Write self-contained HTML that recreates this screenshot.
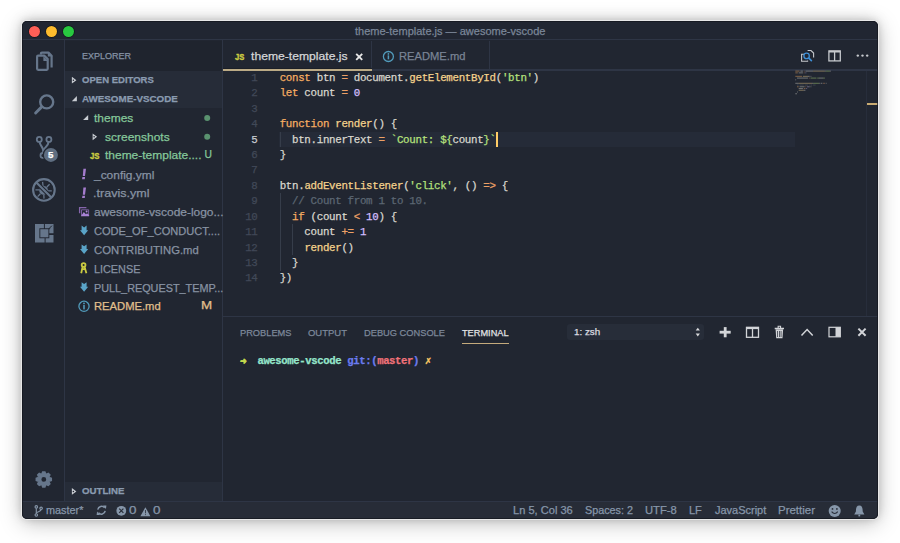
<!DOCTYPE html>
<html><head><meta charset="utf-8">
<style>
*{margin:0;padding:0;box-sizing:border-box}
html,body{width:900px;height:543px;overflow:hidden;background:#fff}
body{position:relative;font-family:"Liberation Sans",sans-serif}
.a{position:absolute}
.t{position:absolute;white-space:pre;line-height:0;height:0;-webkit-text-stroke-width:.25px}
svg.a{overflow:visible}
</style></head><body>
<div class="a" style="left:21.9px;top:21.1px;width:855.90px;height:497.50px;border-radius:5px;box-shadow:0 0 0 1.1px rgba(236,236,236,.85),0 0 7px rgba(0,0,0,.13),0 -2px 14px rgba(0,0,0,.10),0 4px 22px rgba(0,0,0,.25)"></div>
<div class="a" style="left:21.9px;top:21.1px;width:855.90px;height:497.50px;border-radius:5px;overflow:hidden;background:#212631">
<div class="a" style="left:-21.9px;top:-21.1px;width:900px;height:543px">
<div class="a" style="left:21.90px;top:21.10px;width:855.90px;height:18.80px;background:#212632;"></div>
<div class="a" style="left:21.90px;top:39.30px;width:855.90px;height:1.20px;background:#2e3545;"></div>
<div class="a" style="left:28.9px;top:25.6px;width:11px;height:11px;border-radius:50%;background:#fe5f57;box-shadow:0 0 0 .7px rgba(0,0,0,.45)"></div>
<div class="a" style="left:46.1px;top:25.6px;width:11px;height:11px;border-radius:50%;background:#febc2e;box-shadow:0 0 0 .7px rgba(0,0,0,.45)"></div>
<div class="a" style="left:63.3px;top:25.6px;width:11px;height:11px;border-radius:50%;background:#28c840;box-shadow:0 0 0 .7px rgba(0,0,0,.45)"></div>
<div class="t" style="left:354.96px;top:31.10px;font:normal 11.7px/0 'Liberation Sans',sans-serif;color:#7b8698;transform:scaleX(0.9426);transform-origin:0 0;">theme-template.js — awesome-vscode</div>
<div class="a" style="left:64.00px;top:39.90px;width:1.20px;height:461.60px;background:#2e3545;"></div>
<svg class="a" style="left:0;top:0" width="900" height="543" viewBox="0 0 900 543" ><g fill="none" stroke="#66768b" stroke-width="2.2" stroke-linejoin="round">
<path d="M40.9,54.6 V53.6 Q40.9,52.6 41.9,52.6 H48.5 L51.6,55.7 V67.6"/>
<path d="M38.1,55.7 H44.4 L47.7,59.0 V68.8 Q47.7,69.8 46.7,69.8 H38.1 Q37.1,69.8 37.1,68.8 V56.7 Q37.1,55.7 38.1,55.7 Z"/>
</g><path d="M43.4,56.2 V61.0 H48.2 Z" fill="#66768b"/><path d="M47.8,51.6 V56.4 H52.6 Z" fill="#66768b"/></svg>
<svg class="a" style="left:0;top:0" width="900" height="543" viewBox="0 0 900 543" ><g fill="none" stroke="#66768b"><circle cx="46.7" cy="101.9" r="6.5" stroke-width="2.4"/>
<path d="M41.2,107.4 L35.6,113.0" stroke-width="2.9" stroke-linecap="round"/></g></svg>
<svg class="a" style="left:0;top:0" width="900" height="543" viewBox="0 0 900 543" ><g fill="none" stroke="#66768b" stroke-width="1.8"><circle cx="39.3" cy="139.4" r="2.5"/><circle cx="48.9" cy="139.4" r="2.5"/>
<circle cx="42.9" cy="155.4" r="2.4"/><path d="M39.6,142 C40,146 43.2,147 43.2,150.5 V153" stroke-width="2.1"/><path d="M48.6,142 C48.2,146 45,147 43.2,150.5" stroke-width="2.1"/></g>
<circle cx="50.9" cy="154.9" r="8.2" fill="#212631"/><circle cx="50.9" cy="154.9" r="7.0" fill="#5f6e81"/></svg>
<div class="t" style="left:48.34px;top:155.10px;font:bold 9.4px/0 'Liberation Sans',sans-serif;color:#ffffff;transform:scaleX(1.0316);transform-origin:0 0;">5</div>
<svg class="a" style="left:0;top:0" width="900" height="543" viewBox="0 0 900 543" ><g fill="#66768b"><circle cx="43.6" cy="190.4" r="4.4"/></g>
<g stroke="#66768b" stroke-width="1.3" fill="none"><path d="M35.4,189.9 H39.4 M48.0,190.9 H51.8 M42.6,181.9 L43.0,186.0 M43.8,194.6 L44.0,198.6 M37.2,184.8 L40.2,187.2 M47.0,194.0 L49.8,196.6 M37.6,196.6 L40.4,193.8 M46.8,187 L49.6,184.2"/></g>
<path d="M36.4,182.4 L51.4,197.4" stroke="#212631" stroke-width="4.2"/>
<g fill="none" stroke="#66768b" stroke-width="2.1"><circle cx="43.9" cy="189.9" r="10.8"/><path d="M36.4,182.4 L51.4,197.4"/></g></svg>
<svg class="a" style="left:0;top:0" width="900" height="543" viewBox="0 0 900 543" ><g fill="#66768b"><path d="M35,224 H43.9 V228.3 H39.4 V238.3 H44.6 V242.5 H35 Z"/>
<path d="M44.9,224 H53.5 V233.3 H49.3 V229.6 L50.6,228.3 H44.9 Z"/><path d="M49.3,234.9 H53.5 V242.5 H45.6 V238.3 H49.3 Z"/>
<rect x="40.3" y="229.2" width="8.1" height="8.1"/></g><path d="M48.6,229.0 L51.9,225.7" stroke="#212631" stroke-width="1.0"/></svg>
<svg class="a" style="left:0;top:0" width="900" height="543" viewBox="0 0 900 543" ><path d="M49.33,476.82 L52.05,477.80 L52.05,481.00 L49.33,481.98 L49.53,481.49 L50.76,484.10 L48.50,486.36 L45.89,485.13 L46.38,484.93 L45.40,487.65 L42.20,487.65 L41.22,484.93 L41.71,485.13 L39.10,486.36 L36.84,484.10 L38.07,481.49 L38.27,481.98 L35.55,481.00 L35.55,477.80 L38.27,476.82 L38.07,477.31 L36.84,474.70 L39.10,472.44 L41.71,473.67 L41.22,473.87 L42.20,471.15 L45.40,471.15 L46.38,473.87 L45.89,473.67 L48.50,472.44 L50.76,474.70 L49.53,477.31Z M46.199999999999996,479.4 A2.4,2.4 0 1,0 41.4,479.4 A2.4,2.4 0 1,0 46.199999999999996,479.4Z" fill="#66768b" fill-rule="evenodd"/></svg>
<div class="a" style="left:65.20px;top:40.50px;width:156.70px;height:30.20px;background:#1f242e;"></div>
<div class="a" style="left:65.20px;top:70.70px;width:156.70px;height:37.50px;background:#262c38;"></div>
<div class="a" style="left:65.20px;top:482.00px;width:156.70px;height:19.50px;background:#262c38;"></div>
<div class="a" style="left:221.90px;top:39.90px;width:1.20px;height:461.60px;background:#2e3545;"></div>
<div class="t" style="left:81.98px;top:56.20px;font:normal 9.4px/0 'Liberation Sans',sans-serif;color:#8592a4;transform:scaleX(0.9620);transform-origin:0 0;">EXPLORER</div>
<div class="t" style="left:82.22px;top:79.90px;font:bold 9.9px/0 'Liberation Sans',sans-serif;color:#8a9bb0;transform:scaleX(0.9654);transform-origin:0 0;">OPEN EDITORS</div>
<div class="t" style="left:82.45px;top:98.60px;font:bold 9.9px/0 'Liberation Sans',sans-serif;color:#8a9bb0;transform:scaleX(0.9927);transform-origin:0 0;">AWESOME-VSCODE</div>
<div class="t" style="left:82.21px;top:491.20px;font:bold 9.9px/0 'Liberation Sans',sans-serif;color:#8a9bb0;transform:scaleX(0.9812);transform-origin:0 0;">OUTLINE</div>
<svg class="a" style="left:0;top:0" width="900" height="543" viewBox="0 0 900 543" ><path d="M71.9,76.8 L76.4,80.2 L71.9,83.60000000000001 Z" fill="#c8ccd2"/><circle cx="73.4" cy="80.2" r="0.75" fill="#212631"/></svg>
<svg class="a" style="left:0;top:0" width="900" height="543" viewBox="0 0 900 543" ><path d="M76.89999999999999,96.1 V101.2 H71.8 Z" fill="#c8ccd2"/></svg>
<svg class="a" style="left:0;top:0" width="900" height="543" viewBox="0 0 900 543" ><path d="M71.9,488.0 L76.4,491.4 L71.9,494.79999999999995 Z" fill="#c8ccd2"/><circle cx="73.4" cy="491.4" r="0.75" fill="#212631"/></svg>
<svg class="a" style="left:0;top:0" width="900" height="543" viewBox="0 0 900 543" ><path d="M88.2,115.0 V120.10000000000001 H83.10000000000001 Z" fill="#c8ccd2"/></svg>
<svg class="a" style="left:0;top:0" width="900" height="543" viewBox="0 0 900 543" ><path d="M92.6,133.4 L97.1,136.8 L92.6,140.20000000000002 Z" fill="#c8ccd2"/><circle cx="94.1" cy="136.8" r="0.75" fill="#212631"/></svg>
<div class="t" style="left:94.14px;top:118.10px;font:normal 11.7px/0 'Liberation Sans',sans-serif;color:#85c89a;transform:scaleX(1.0252);transform-origin:0 0;">themes</div>
<svg class="a" style="left:0;top:0" width="900" height="543" viewBox="0 0 900 543" ><circle cx="207.2" cy="117.9" r="3.0" fill="#5a926f"/></svg>
<div class="t" style="left:104.64px;top:136.90px;font:normal 11.7px/0 'Liberation Sans',sans-serif;color:#85c89a;transform:scaleX(1.0256);transform-origin:0 0;">screenshots</div>
<svg class="a" style="left:0;top:0" width="900" height="543" viewBox="0 0 900 543" ><circle cx="207.2" cy="136.7" r="3.0" fill="#5a926f"/></svg>
<div class="t" style="left:104.64px;top:155.40px;font:normal 11.7px/0 'Liberation Sans',sans-serif;color:#85c89a;transform:scaleX(1.0247);transform-origin:0 0;">theme-template....</div>
<div class="t" style="left:204.55px;top:155.40px;font:normal 10.3px/0 'Liberation Sans',sans-serif;color:#85c89a;transform:scaleX(1.0000);transform-origin:0 0;">U</div>
<div class="t" style="left:94.30px;top:174.80px;font:normal 11.7px/0 'Liberation Sans',sans-serif;color:#8893a3;transform:scaleX(1.0215);transform-origin:0 0;">_config.yml</div>
<div class="t" style="left:93.23px;top:193.40px;font:normal 11.7px/0 'Liberation Sans',sans-serif;color:#8893a3;transform:scaleX(1.0739);transform-origin:0 0;">.travis.yml</div>
<div class="t" style="left:94.09px;top:212.20px;font:normal 11.7px/0 'Liberation Sans',sans-serif;color:#8893a3;transform:scaleX(1.0220);transform-origin:0 0;">awesome-vscode-logo...</div>
<div class="t" style="left:94.13px;top:231.10px;font:normal 11.7px/0 'Liberation Sans',sans-serif;color:#8893a3;transform:scaleX(0.9468);transform-origin:0 0;">CODE_OF_CONDUCT....</div>
<div class="t" style="left:94.12px;top:249.90px;font:normal 11.7px/0 'Liberation Sans',sans-serif;color:#8893a3;transform:scaleX(0.9660);transform-origin:0 0;">CONTRIBUTING.md</div>
<div class="t" style="left:93.87px;top:268.70px;font:normal 11.7px/0 'Liberation Sans',sans-serif;color:#8893a3;transform:scaleX(0.9278);transform-origin:0 0;">LICENSE</div>
<div class="t" style="left:93.87px;top:287.60px;font:normal 11.7px/0 'Liberation Sans',sans-serif;color:#8893a3;transform:scaleX(0.9273);transform-origin:0 0;">PULL_REQUEST_TEMP...</div>
<div class="t" style="left:93.84px;top:306.40px;font:normal 11.7px/0 'Liberation Sans',sans-serif;color:#e2c08d;transform:scaleX(0.9594);transform-origin:0 0;">README.md</div>
<div class="t" style="left:201.43px;top:306.40px;font:normal 10.3px/0 'Liberation Sans',sans-serif;color:#e2c08d;transform:scaleX(1.3000);transform-origin:0 0;">M</div>
<div class="t" style="left:89.70px;top:155.60px;font:bold 9.7px/0 'Liberation Sans',sans-serif;color:#cbcb41;transform:scaleX(0.8000);transform-origin:0 0;-webkit-text-stroke-width:.45px">JS</div>
<svg class="a" style="left:0;top:0" width="900" height="543" viewBox="0 0 900 543" ><g fill="#a47ccd"><path d="M83.4,168.7 H86.0 L85.0,176.1 H82.8Z"/><path d="M82.4,177.0 H85.0 L84.8,179.3 H82.1Z"/></g></svg>
<svg class="a" style="left:0;top:0" width="900" height="543" viewBox="0 0 900 543" ><g fill="#a47ccd"><path d="M83.4,187.39999999999998 H86.0 L85.0,194.79999999999998 H82.8Z"/><path d="M82.4,195.7 H85.0 L84.8,198.0 H82.1Z"/></g></svg>
<svg class="a" style="left:0;top:0" width="900" height="543" viewBox="0 0 900 543" ><path d="M79.6,213.2 V207.7 H86.4" fill="none" stroke="#8565ab" stroke-width="1.3"/>
<path d="M81.5,216 V209.8 H88.6 V216" fill="none" stroke="#7a5d9e" stroke-width="1.0"/>
<path d="M80.9,216.2 L83.8,211.9 L85.9,214.3 L87.0,213.3 L89.1,215.0 V216.2 Z" fill="#a883d4"/><circle cx="86.6" cy="211.5" r=".95" fill="#b08ad8"/></svg>
<svg class="a" style="left:0;top:0" width="900" height="543" viewBox="0 0 900 543" ><path d="M81.6,225.60000000000002 L84.1,227.4 L86.6,225.60000000000002 V230.20000000000002 H88.2 L84.1,235.20000000000002 L80.0,230.20000000000002 H81.6 Z" fill="#5aa4c8"/></svg>
<svg class="a" style="left:0;top:0" width="900" height="543" viewBox="0 0 900 543" ><path d="M81.6,244.4 L84.1,246.2 L86.6,244.4 V249.0 H88.2 L84.1,254.0 L80.0,249.0 H81.6 Z" fill="#5aa4c8"/></svg>
<svg class="a" style="left:0;top:0" width="900" height="543" viewBox="0 0 900 543" ><path d="M81.6,282.2 L84.1,284.0 L86.6,282.2 V286.79999999999995 H88.2 L84.1,291.79999999999995 L80.0,286.79999999999995 H81.6 Z" fill="#5aa4c8"/></svg>
<svg class="a" style="left:0;top:0" width="900" height="543" viewBox="0 0 900 543" ><g fill="none" stroke="#cbcb41" stroke-width="1.8"><circle cx="83.6" cy="265.0" r="1.9"/>
<path d="M82.6,267.0 L81.2,273.3 M84.6,267.0 L86.4,273.3"/></g><path d="M81.8,268.2 H85.6 V270 H81.8Z" fill="#cbcb41"/></svg>
<svg class="a" style="left:0;top:0" width="900" height="543" viewBox="0 0 900 543" ><circle cx="84" cy="306.3" r="5.1" fill="none" stroke="#519aba" stroke-width="1.3"/>
<circle cx="84" cy="303.4" r=".9" fill="#519aba"/><rect x="83.2" y="305.0" width="1.6" height="4.4" fill="#519aba"/></svg>
<div class="a" style="left:371.20px;top:40.50px;width:1.20px;height:30.10px;background:#2e3545;"></div>
<div class="a" style="left:488.60px;top:40.50px;width:1.20px;height:30.10px;background:#2e3545;"></div>
<div class="a" style="left:223.10px;top:69.00px;width:654.70px;height:1.90px;background:#2e3545;"></div>
<div class="a" style="left:223.10px;top:68.00px;width:148.70px;height:1.00px;background:#1b1f27;"></div>
<div class="a" style="left:223.10px;top:68.90px;width:148.70px;height:2.00px;background:#bcab86;"></div>
<div class="t" style="left:235.10px;top:56.60px;font:bold 9.6px/0 'Liberation Sans',sans-serif;color:#cbcb41;transform:scaleX(0.7911);transform-origin:0 0;-webkit-text-stroke-width:.45px">JS</div>
<div class="t" style="left:250.54px;top:56.40px;font:normal 11.7px/0 'Liberation Sans',sans-serif;color:#d5d6d8;transform:scaleX(1.0396);transform-origin:0 0;">theme-template.js</div>
<svg class="a" style="left:0;top:0" width="900" height="543" viewBox="0 0 900 543" ><path d="M356.2,53.8 L362.2,59.8 M362.2,53.8 L356.2,59.8" stroke="#e6e6e6" stroke-width="1.9"/></svg>
<svg class="a" style="left:0;top:0" width="900" height="543" viewBox="0 0 900 543" ><circle cx="388.4" cy="56.5" r="5.0" fill="none" stroke="#519aba" stroke-width="1.3"/>
<circle cx="388.4" cy="53.9" r=".85" fill="#519aba"/><rect x="387.65" y="55.3" width="1.5" height="4.0" fill="#519aba"/></svg>
<div class="t" style="left:398.64px;top:56.40px;font:normal 11.7px/0 'Liberation Sans',sans-serif;color:#7a8495;transform:scaleX(0.9565);transform-origin:0 0;">README.md</div>
<svg class="a" style="left:0;top:0" width="900" height="543" viewBox="0 0 900 543" ><g fill="none" stroke="#c5c8cc" stroke-width="1.1"><path d="M807.6,50.5 H811 L813.6,53.1 V57.5"/><path d="M804.3,54.2 H801.6 V61.3 H807.6 V60.5"/></g>
<g fill="none" stroke="#3f8fd6"><circle cx="806.6" cy="55.9" r="2.7" stroke-width="1.3"/><path d="M808.6,57.9 L811.8,61.1" stroke-width="1.6"/></g></svg>
<svg class="a" style="left:0;top:0" width="900" height="543" viewBox="0 0 900 543" ><g fill="none" stroke="#c5c8cc" stroke-width="1.3"><rect x="828.9" y="50.9" width="11.4" height="10.0"/><path d="M834.6,51 V61"/><path d="M828.9,51.7 H840.3" stroke-width="1.8"/></g></svg>
<svg class="a" style="left:0;top:0" width="900" height="543" viewBox="0 0 900 543" ><g fill="#c5c8cc"><circle cx="857.8" cy="55.6" r="1.2"/><circle cx="862.5" cy="55.6" r="1.2"/><circle cx="867.2" cy="55.6" r="1.2"/></g></svg>
<div class="a" style="left:279.20px;top:131.71px;width:516.30px;height:15.43px;background:#252b38;"></div>
<div class="a" style="left:279.90px;top:131.71px;width:0.90px;height:15.43px;background:#363d4a;"></div>
<div class="a" style="left:279.90px;top:193.42px;width:0.90px;height:77.14px;background:#363d4a;"></div>
<div class="a" style="left:292.24px;top:224.28px;width:0.90px;height:30.86px;background:#363d4a;"></div>
<div class="t" style="left:217.00px;width:40.5px;text-align:right;top:77.91px;font:10.8px/0 'Liberation Mono',monospace;letter-spacing:-0.308px;color:#414958">1</div>
<div class="t" style="left:279.70px;top:77.91px;font:10.8px/0 'Liberation Mono',monospace;letter-spacing:-0.308px"><span style="color:#f6ad62">const</span><span style="color:#d9d7ce"> btn </span><span style="color:#eca066">=</span><span style="color:#d9d7ce"> document.</span><span style="color:#f4d28c">getElementById</span><span style="color:#d9d7ce">(</span><span style="color:#b5e07c">'btn'</span><span style="color:#d9d7ce">)</span></div>
<div class="t" style="left:217.00px;width:40.5px;text-align:right;top:93.34px;font:10.8px/0 'Liberation Mono',monospace;letter-spacing:-0.308px;color:#414958">2</div>
<div class="t" style="left:279.70px;top:93.34px;font:10.8px/0 'Liberation Mono',monospace;letter-spacing:-0.308px"><span style="color:#f6ad62">let</span><span style="color:#d9d7ce"> count </span><span style="color:#eca066">=</span><span style="color:#d9d7ce"> </span><span style="color:#d4bfff">0</span></div>
<div class="t" style="left:217.00px;width:40.5px;text-align:right;top:108.77px;font:10.8px/0 'Liberation Mono',monospace;letter-spacing:-0.308px;color:#414958">3</div>
<div class="t" style="left:279.70px;top:108.77px;font:10.8px/0 'Liberation Mono',monospace;letter-spacing:-0.308px"></div>
<div class="t" style="left:217.00px;width:40.5px;text-align:right;top:124.20px;font:10.8px/0 'Liberation Mono',monospace;letter-spacing:-0.308px;color:#414958">4</div>
<div class="t" style="left:279.70px;top:124.20px;font:10.8px/0 'Liberation Mono',monospace;letter-spacing:-0.308px"><span style="color:#f6ad62">function</span><span style="color:#d9d7ce"> </span><span style="color:#f4d28c">render</span><span style="color:#d9d7ce">() {</span></div>
<div class="t" style="left:217.00px;width:40.5px;text-align:right;top:139.63px;font:10.8px/0 'Liberation Mono',monospace;letter-spacing:-0.308px;color:#c7cad0">5</div>
<div class="t" style="left:279.70px;top:139.63px;font:10.8px/0 'Liberation Mono',monospace;letter-spacing:-0.308px"><span style="color:#d9d7ce">  btn.innerText </span><span style="color:#eca066">=</span><span style="color:#d9d7ce"> </span><span style="color:#b5e07c">`Count: ${</span><span style="color:#d9d7ce">count</span><span style="color:#b5e07c">}`</span></div>
<div class="t" style="left:217.00px;width:40.5px;text-align:right;top:155.05px;font:10.8px/0 'Liberation Mono',monospace;letter-spacing:-0.308px;color:#414958">6</div>
<div class="t" style="left:279.70px;top:155.05px;font:10.8px/0 'Liberation Mono',monospace;letter-spacing:-0.308px"><span style="color:#d9d7ce">}</span></div>
<div class="t" style="left:217.00px;width:40.5px;text-align:right;top:170.48px;font:10.8px/0 'Liberation Mono',monospace;letter-spacing:-0.308px;color:#414958">7</div>
<div class="t" style="left:279.70px;top:170.48px;font:10.8px/0 'Liberation Mono',monospace;letter-spacing:-0.308px"></div>
<div class="t" style="left:217.00px;width:40.5px;text-align:right;top:185.91px;font:10.8px/0 'Liberation Mono',monospace;letter-spacing:-0.308px;color:#414958">8</div>
<div class="t" style="left:279.70px;top:185.91px;font:10.8px/0 'Liberation Mono',monospace;letter-spacing:-0.308px"><span style="color:#d9d7ce">btn.</span><span style="color:#f4d28c">addEventListener</span><span style="color:#d9d7ce">(</span><span style="color:#b5e07c">'click'</span><span style="color:#d9d7ce">, () </span><span style="color:#eca066">=&gt;</span><span style="color:#d9d7ce"> {</span></div>
<div class="t" style="left:217.00px;width:40.5px;text-align:right;top:201.34px;font:10.8px/0 'Liberation Mono',monospace;letter-spacing:-0.308px;color:#414958">9</div>
<div class="t" style="left:279.70px;top:201.34px;font:10.8px/0 'Liberation Mono',monospace;letter-spacing:-0.308px"><span style="color:#5c6773">  // Count from 1 to 10.</span></div>
<div class="t" style="left:217.00px;width:40.5px;text-align:right;top:216.77px;font:10.8px/0 'Liberation Mono',monospace;letter-spacing:-0.308px;color:#414958">10</div>
<div class="t" style="left:279.70px;top:216.77px;font:10.8px/0 'Liberation Mono',monospace;letter-spacing:-0.308px"><span style="color:#d9d7ce">  </span><span style="color:#f6ad62">if</span><span style="color:#d9d7ce"> (count </span><span style="color:#eca066">&lt;</span><span style="color:#d9d7ce"> </span><span style="color:#d4bfff">10</span><span style="color:#d9d7ce">) {</span></div>
<div class="t" style="left:217.00px;width:40.5px;text-align:right;top:232.19px;font:10.8px/0 'Liberation Mono',monospace;letter-spacing:-0.308px;color:#414958">11</div>
<div class="t" style="left:279.70px;top:232.19px;font:10.8px/0 'Liberation Mono',monospace;letter-spacing:-0.308px"><span style="color:#d9d7ce">    count </span><span style="color:#eca066">+=</span><span style="color:#d9d7ce"> </span><span style="color:#d4bfff">1</span></div>
<div class="t" style="left:217.00px;width:40.5px;text-align:right;top:247.62px;font:10.8px/0 'Liberation Mono',monospace;letter-spacing:-0.308px;color:#414958">12</div>
<div class="t" style="left:279.70px;top:247.62px;font:10.8px/0 'Liberation Mono',monospace;letter-spacing:-0.308px"><span style="color:#d9d7ce">    </span><span style="color:#f4d28c">render</span><span style="color:#d9d7ce">()</span></div>
<div class="t" style="left:217.00px;width:40.5px;text-align:right;top:263.05px;font:10.8px/0 'Liberation Mono',monospace;letter-spacing:-0.308px;color:#414958">13</div>
<div class="t" style="left:279.70px;top:263.05px;font:10.8px/0 'Liberation Mono',monospace;letter-spacing:-0.308px"><span style="color:#d9d7ce">  }</span></div>
<div class="t" style="left:217.00px;width:40.5px;text-align:right;top:278.48px;font:10.8px/0 'Liberation Mono',monospace;letter-spacing:-0.308px;color:#414958">14</div>
<div class="t" style="left:279.70px;top:278.48px;font:10.8px/0 'Liberation Mono',monospace;letter-spacing:-0.308px"><span style="color:#d9d7ce">})</span></div>
<div class="a" style="left:496.40px;top:131.80px;width:1.70px;height:15.40px;background:#ffcc66;"></div>
<svg class="a" style="left:0;top:0" width="900" height="543" viewBox="0 0 900 543" ><rect x="795.30" y="70.60" width="4.22" height="1.05" fill="#f6ad62" opacity=".42"/><rect x="800.37" y="70.60" width="2.54" height="1.05" fill="#d9d7ce" opacity=".42"/><rect x="803.75" y="70.60" width="0.84" height="1.05" fill="#eca066" opacity=".42"/><rect x="805.44" y="70.60" width="7.60" height="1.05" fill="#d9d7ce" opacity=".42"/><rect x="813.04" y="70.60" width="11.83" height="1.05" fill="#f4d28c" opacity=".42"/><rect x="824.88" y="70.60" width="0.84" height="1.05" fill="#d9d7ce" opacity=".42"/><rect x="825.72" y="70.60" width="4.22" height="1.05" fill="#b5e07c" opacity=".42"/><rect x="829.94" y="70.60" width="0.84" height="1.05" fill="#d9d7ce" opacity=".42"/><rect x="795.30" y="72.34" width="2.54" height="1.05" fill="#f6ad62" opacity=".42"/><rect x="798.68" y="72.34" width="4.22" height="1.05" fill="#d9d7ce" opacity=".42"/><rect x="803.75" y="72.34" width="0.84" height="1.05" fill="#eca066" opacity=".42"/><rect x="805.44" y="72.34" width="0.84" height="1.05" fill="#d4bfff" opacity=".42"/><rect x="795.30" y="75.82" width="6.76" height="1.05" fill="#f6ad62" opacity=".42"/><rect x="802.90" y="75.82" width="5.07" height="1.05" fill="#f4d28c" opacity=".42"/><rect x="807.97" y="75.82" width="1.69" height="1.05" fill="#d9d7ce" opacity=".42"/><rect x="810.51" y="75.82" width="0.84" height="1.05" fill="#d9d7ce" opacity=".42"/><rect x="796.99" y="77.56" width="10.98" height="1.05" fill="#d9d7ce" opacity=".42"/><rect x="808.82" y="77.56" width="0.84" height="1.05" fill="#eca066" opacity=".42"/><rect x="810.51" y="77.56" width="5.92" height="1.05" fill="#b5e07c" opacity=".42"/><rect x="817.27" y="77.56" width="1.69" height="1.05" fill="#b5e07c" opacity=".42"/><rect x="818.96" y="77.56" width="4.22" height="1.05" fill="#d9d7ce" opacity=".42"/><rect x="823.18" y="77.56" width="1.69" height="1.05" fill="#b5e07c" opacity=".42"/><rect x="795.30" y="79.30" width="0.84" height="1.05" fill="#d9d7ce" opacity=".42"/><rect x="795.30" y="82.78" width="3.38" height="1.05" fill="#d9d7ce" opacity=".42"/><rect x="798.68" y="82.78" width="13.52" height="1.05" fill="#f4d28c" opacity=".42"/><rect x="812.20" y="82.78" width="0.84" height="1.05" fill="#d9d7ce" opacity=".42"/><rect x="813.04" y="82.78" width="5.92" height="1.05" fill="#b5e07c" opacity=".42"/><rect x="818.96" y="82.78" width="0.84" height="1.05" fill="#d9d7ce" opacity=".42"/><rect x="820.65" y="82.78" width="1.69" height="1.05" fill="#d9d7ce" opacity=".42"/><rect x="823.18" y="82.78" width="1.69" height="1.05" fill="#eca066" opacity=".42"/><rect x="825.72" y="82.78" width="0.84" height="1.05" fill="#d9d7ce" opacity=".42"/><rect x="796.99" y="84.52" width="1.69" height="1.05" fill="#5c6773" opacity=".42"/><rect x="799.52" y="84.52" width="4.22" height="1.05" fill="#5c6773" opacity=".42"/><rect x="804.59" y="84.52" width="3.38" height="1.05" fill="#5c6773" opacity=".42"/><rect x="808.82" y="84.52" width="0.84" height="1.05" fill="#5c6773" opacity=".42"/><rect x="810.51" y="84.52" width="1.69" height="1.05" fill="#5c6773" opacity=".42"/><rect x="813.04" y="84.52" width="2.54" height="1.05" fill="#5c6773" opacity=".42"/><rect x="796.99" y="86.26" width="1.69" height="1.05" fill="#f6ad62" opacity=".42"/><rect x="799.52" y="86.26" width="5.07" height="1.05" fill="#d9d7ce" opacity=".42"/><rect x="805.44" y="86.26" width="0.84" height="1.05" fill="#eca066" opacity=".42"/><rect x="807.13" y="86.26" width="1.69" height="1.05" fill="#d4bfff" opacity=".42"/><rect x="808.82" y="86.26" width="0.84" height="1.05" fill="#d9d7ce" opacity=".42"/><rect x="810.51" y="86.26" width="0.84" height="1.05" fill="#d9d7ce" opacity=".42"/><rect x="798.68" y="88.00" width="4.22" height="1.05" fill="#d9d7ce" opacity=".42"/><rect x="803.75" y="88.00" width="1.69" height="1.05" fill="#eca066" opacity=".42"/><rect x="806.28" y="88.00" width="0.84" height="1.05" fill="#d4bfff" opacity=".42"/><rect x="798.68" y="89.74" width="5.07" height="1.05" fill="#f4d28c" opacity=".42"/><rect x="803.75" y="89.74" width="1.69" height="1.05" fill="#d9d7ce" opacity=".42"/><rect x="796.99" y="91.48" width="0.84" height="1.05" fill="#d9d7ce" opacity=".42"/><rect x="795.30" y="93.22" width="1.69" height="1.05" fill="#d9d7ce" opacity=".42"/></svg>
<div class="a" style="left:865.90px;top:70.80px;width:0.90px;height:245.20px;background:#272d3b;"></div>
<div class="a" style="left:866.80px;top:102.90px;width:11.00px;height:1.90px;background:#c9ab72;"></div>
<div class="a" style="left:223.10px;top:316.00px;width:654.70px;height:1.20px;background:#2e3545;"></div>
<div class="t" style="left:239.56px;top:332.70px;font:normal 9.45px/0 'Liberation Sans',sans-serif;color:#7d889a;transform:scaleX(0.9815);transform-origin:0 0;">PROBLEMS</div>
<div class="t" style="left:307.80px;top:332.70px;font:normal 9.45px/0 'Liberation Sans',sans-serif;color:#7d889a;transform:scaleX(1.0039);transform-origin:0 0;">OUTPUT</div>
<div class="t" style="left:363.96px;top:332.70px;font:normal 9.45px/0 'Liberation Sans',sans-serif;color:#7d889a;transform:scaleX(0.9834);transform-origin:0 0;">DEBUG CONSOLE</div>
<div class="t" style="left:462.46px;top:332.70px;font:normal 9.45px/0 'Liberation Sans',sans-serif;color:#e3e4e6;transform:scaleX(0.9757);transform-origin:0 0;">TERMINAL</div>
<div class="a" style="left:462.40px;top:342.60px;width:46.80px;height:1.50px;background:#c4aa7c;"></div>
<div class="a" style="left:567.1px;top:324.3px;width:136.9px;height:15.4px;border-radius:3px;background:#272d39"></div>
<div class="t" style="left:574.32px;top:332.40px;font:normal 9.45px/0 'Liberation Sans',sans-serif;color:#dcdde0;transform:scaleX(1.0375);transform-origin:0 0;">1: zsh</div>
<svg class="a" style="left:0;top:0" width="900" height="543" viewBox="0 0 900 543" ><g fill="#d8d9dc"><path d="M695.7,330.6 L697.8,327.8 L699.9,330.6Z"/><path d="M695.7,333.6 L697.8,336.4 L699.9,333.6Z"/></g></svg>
<svg class="a" style="left:0;top:0" width="900" height="543" viewBox="0 0 900 543" ><g fill="#d2d4d8"><rect x="719.6" y="330.8" width="11.1" height="2.8"/><rect x="723.8" y="327.1" width="2.8" height="10.2"/></g>
<g fill="none" stroke="#d2d4d8" stroke-width="1.3"><rect x="746.5" y="327.4" width="12" height="9.9"/><path d="M752.5,327.6 V337.3"/></g><rect x="746" y="326.9" width="13" height="2.2" fill="#d2d4d8"/>
<g fill="#d2d4d8"><path d="M774.7,327.8 H784 V329.2 H774.7Z M777.6,325.8 H781.1 V327.8 H780 V326.8 H778.7 V327.8 H777.6Z M775.6,329.6 H783.1 L782.5,338.2 H776.2Z"/></g>
<g fill="#232834"><rect x="777.3" y="331" width=".7" height="6"/><rect x="779" y="331" width=".7" height="6"/><rect x="780.7" y="331" width=".7" height="6"/></g>
<path d="M801.5,335.5 L807.1,329.6 L812.7,335.5" fill="none" stroke="#d2d4d8" stroke-width="1.5"/>
<g fill="none" stroke="#d2d4d8" stroke-width="1.2"><rect x="829" y="327.3" width="11.3" height="9.5"/></g><rect x="835.5" y="327.3" width="4.8" height="9.5" fill="#d2d4d8"/>
<path d="M858.4,328.6 L865.6,335.8 M865.6,328.6 L858.4,335.8" stroke="#d2d4d8" stroke-width="2.0"/></svg>
<div class="t" style="left:240.28px;top:361.20px;font:bold 8.5px/0 'Liberation Sans',sans-serif;color:#c3d94e;transform:scaleX(0.8923);transform-origin:0 0;">➜</div>
<div class="t" style="left:257.4px;top:361.40px;font:bold 10.6px/0 'Liberation Mono',monospace;letter-spacing:-0.37px;color:#95e6cb">awesome-vscode <span style="color:#6b7cf0">git:(</span><span style="color:#f07178">master</span><span style="color:#6b7cf0">)</span> <span style="color:#ffcc66">✗</span></div>
<div class="a" style="left:21.90px;top:502.00px;width:855.90px;height:17.10px;background:#272c37;"></div>
<div class="a" style="left:21.90px;top:500.90px;width:855.90px;height:1.20px;background:#2e3545;"></div>
<svg class="a" style="left:0;top:0" width="900" height="543" viewBox="0 0 900 543" ><g fill="none" stroke="#8696a9" stroke-width="1.15"><circle cx="36.3" cy="506.9" r="1.25"/><circle cx="36.3" cy="515.0" r="1.25"/><circle cx="41.1" cy="508.3" r="1.25"/>
<path d="M36.3,508.2 V513.7"/><path d="M41.1,509.6 C41.1,511.8 36.6,511.6 36.4,513.2"/></g></svg>
<div class="t" style="left:46.11px;top:511.20px;font:normal 10.29px/0 'Liberation Sans',sans-serif;color:#8696a9;transform:scaleX(1.0551);transform-origin:0 0;">master*</div>
<svg class="a" style="left:0;top:0" width="900" height="543" viewBox="0 0 900 543" ><g fill="none" stroke="#8696a9" stroke-width="1.5"><path d="M97.8,509.6 A3.9,3.9 0 0,1 104.6,507.7"/><path d="M105.2,510.9 A3.9,3.9 0 0,1 98.4,512.8"/></g>
<g fill="#8696a9"><path d="M103.0,505.6 L106.4,505.4 L105.9,509.1Z"/><path d="M100.0,514.9 L96.6,515.1 L97.1,511.4Z"/></g></svg>
<svg class="a" style="left:0;top:0" width="900" height="543" viewBox="0 0 900 543" ><circle cx="121.3" cy="510.8" r="4.9" fill="#8696a9"/><path d="M119.2,508.7 L123.4,512.9 M123.4,508.7 L119.2,512.9" stroke="#272c37" stroke-width="1.2"/>
<path d="M145.4,507.2 L150.4,516.2 H140.4Z" fill="#8696a9"/><rect x="145.0" y="510" width=".8" height="3.3" fill="#272c37"/><rect x="145.0" y="514.2" width=".8" height=".9" fill="#272c37"/></svg>
<div class="t" style="left:129.15px;top:511.20px;font:normal 10.29px/0 'Liberation Sans',sans-serif;color:#8696a9;transform:scaleX(1.3053);transform-origin:0 0;">0</div>
<div class="t" style="left:153.15px;top:511.20px;font:normal 10.29px/0 'Liberation Sans',sans-serif;color:#8696a9;transform:scaleX(1.3053);transform-origin:0 0;">0</div>
<div class="t" style="left:512.69px;top:511.20px;font:normal 10.29px/0 'Liberation Sans',sans-serif;color:#8696a9;transform:scaleX(1.0783);transform-origin:0 0;">Ln 5, Col 36</div>
<div class="t" style="left:584.97px;top:511.20px;font:normal 10.29px/0 'Liberation Sans',sans-serif;color:#8696a9;transform:scaleX(1.0503);transform-origin:0 0;">Spaces: 2</div>
<div class="t" style="left:645.18px;top:511.20px;font:normal 10.29px/0 'Liberation Sans',sans-serif;color:#8696a9;transform:scaleX(1.0893);transform-origin:0 0;">UTF-8</div>
<div class="t" style="left:689.20px;top:511.20px;font:normal 10.29px/0 'Liberation Sans',sans-serif;color:#8696a9;transform:scaleX(1.0698);transform-origin:0 0;">LF</div>
<div class="t" style="left:714.73px;top:511.20px;font:normal 10.29px/0 'Liberation Sans',sans-serif;color:#8696a9;transform:scaleX(1.0681);transform-origin:0 0;">JavaScript</div>
<div class="t" style="left:778.16px;top:511.20px;font:normal 10.29px/0 'Liberation Sans',sans-serif;color:#8696a9;transform:scaleX(1.1163);transform-origin:0 0;">Prettier</div>
<svg class="a" style="left:0;top:0" width="900" height="543" viewBox="0 0 900 543" ><circle cx="834.7" cy="510.9" r="6.0" fill="#8696a9"/><circle cx="832.5" cy="508.9" r=".9" fill="#272c37"/><circle cx="836.9" cy="508.9" r=".9" fill="#272c37"/>
<path d="M831.6,511.6 Q834.7,515.4 837.8,511.6" fill="none" stroke="#272c37" stroke-width="1.1"/></svg>
<svg class="a" style="left:0;top:0" width="900" height="543" viewBox="0 0 900 543" ><path d="M859.3,505.6 C856.3,505.6 855.9,508.6 855.9,511.5 L854.2,514.6 H864.4 L862.7,511.5 C862.7,508.6 862.3,505.6 859.3,505.6Z" fill="#8696a9"/><rect x="858.4" y="514.6" width="1.8" height="1.8" fill="#8696a9"/></svg>
</div></div>
<div class="a" style="left:21.9px;top:21.1px;width:855.90px;height:497.50px;border-radius:5px;border:1.1px solid rgba(20,23,31,.75)"></div>
</body></html>
